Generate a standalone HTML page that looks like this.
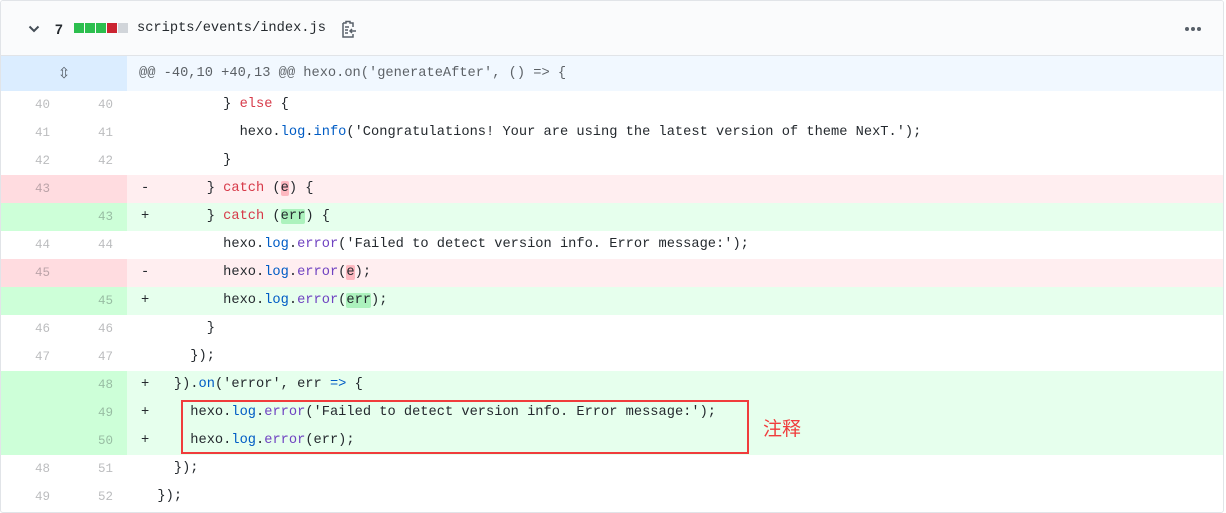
<!DOCTYPE html>
<html><head><meta charset="utf-8"><style>
*{margin:0;padding:0;box-sizing:border-box}
body{width:1226px;height:513px;background:#fff;font-family:"Liberation Mono",monospace;font-size:13.7px;color:#24292e;position:relative;overflow:hidden}
.wrap{position:absolute;left:0;top:0;width:1224px;height:513px;border:1px solid #e1e4e8;border-radius:3px;overflow:hidden}
.hdr{position:absolute;left:0;top:0;width:100%;height:55px;background:#fafbfc;border-bottom:1px solid #e1e4e8}
.row{position:absolute;left:0;width:100%;height:28px;line-height:28px;white-space:pre}
.n{position:absolute;top:0;width:63px;height:28px;color:rgba(27,31,35,.3);font-size:12.5px}
.n1{left:0;padding-left:34px}.n2{left:63px;padding-left:34px}
.c{position:absolute;left:126px;top:0;right:0;height:28px;padding-left:14px}
.del .n{background:#ffdce0}.del .c{background:#ffeef0}
.add .n{background:#cdffd8}.add .c{background:#e6ffed}
.k{color:#d73a49}.b{color:#005cc5}.p{color:#6f42c1}.s{color:#24292e}
.xd{background:#fdb8c0;border-radius:2px}.xa{background:#acf2bd;border-radius:2px}
.sq{position:absolute;top:22px;width:10px;height:10px}
</style></head><body>
<div class="wrap">
<div class="hdr">
<svg style="position:absolute;left:27px;top:23px" width="12" height="10" viewBox="0 0 12 10"><path d="M1.5 2.5L6 7L10.5 2.5" fill="none" stroke="#444d56" stroke-width="2"/></svg>
<span style="position:absolute;left:54px;top:20px;font-family:'Liberation Sans',sans-serif;font-weight:bold;font-size:14px;color:#24292e">7</span>
<span class="sq" style="left:73px;background:#2cbe4e"></span>
<span class="sq" style="left:84px;background:#2cbe4e"></span>
<span class="sq" style="left:95px;background:#2cbe4e"></span>
<span class="sq" style="left:106px;background:#cb2431"></span>
<span class="sq" style="left:117px;background:#d1d5da"></span>
<span style="position:absolute;left:136px;top:20px;font-size:13.7px;color:#24292e">scripts/events/index.js</span>
<svg style="position:absolute;left:339px;top:19px" width="17" height="19" viewBox="0 0 17 19"><path d="M3 3h3V1.5h4V3h3v4M3 3v14h10v-3M5 7h4M5 10h3M5 13h3M16 11h-6M12 9l-2 2 2 2" fill="none" stroke="#586069" stroke-width="1.5"/></svg>
<span style="position:absolute;left:1184px;top:26px;width:4px;height:4px;border-radius:2px;background:#586069;box-shadow:6px 0 #586069,12px 0 #586069"></span>
</div>
<div class="row" style="top:55px;height:35px;line-height:35px">
<div style="position:absolute;left:0;top:0;width:126px;height:35px;background:#dbedff;text-align:center;color:#586069;font-size:15px;font-family:'DejaVu Sans',sans-serif">⇳</div>
<div style="position:absolute;left:126px;top:0;right:0;height:35px;background:#f1f8ff;padding-left:12px;color:rgba(27,31,35,.7)">@@ -40,10 +40,13 @@ hexo.on('generateAfter', () =&gt; {</div>
</div>
<div class="row" style="top:90px"><span class="n n1">40</span><span class="n n2">40</span><span class="c">          } <span class="k">else</span> {</span></div>
<div class="row" style="top:118px"><span class="n n1">41</span><span class="n n2">41</span><span class="c">            hexo.<span class="b">log</span>.<span class="b">info</span>(<span class="s">'Congratulations! Your are using the latest version of theme NexT.'</span>);</span></div>
<div class="row" style="top:146px"><span class="n n1">42</span><span class="n n2">42</span><span class="c">          }</span></div>
<div class="row del" style="top:174px"><span class="n n1">43</span><span class="n n2"></span><span class="c">-       } <span class="k">catch</span> (<span class="xd">e</span>) {</span></div>
<div class="row add" style="top:202px"><span class="n n1"></span><span class="n n2">43</span><span class="c">+       } <span class="k">catch</span> (<span class="xa">err</span>) {</span></div>
<div class="row" style="top:230px"><span class="n n1">44</span><span class="n n2">44</span><span class="c">          hexo.<span class="b">log</span>.<span class="p">error</span>(<span class="s">'Failed to detect version info. Error message:'</span>);</span></div>
<div class="row del" style="top:258px"><span class="n n1">45</span><span class="n n2"></span><span class="c">-         hexo.<span class="b">log</span>.<span class="p">error</span>(<span class="xd">e</span>);</span></div>
<div class="row add" style="top:286px"><span class="n n1"></span><span class="n n2">45</span><span class="c">+         hexo.<span class="b">log</span>.<span class="p">error</span>(<span class="xa">err</span>);</span></div>
<div class="row" style="top:314px"><span class="n n1">46</span><span class="n n2">46</span><span class="c">        }</span></div>
<div class="row" style="top:342px"><span class="n n1">47</span><span class="n n2">47</span><span class="c">      });</span></div>
<div class="row add" style="top:370px"><span class="n n1"></span><span class="n n2">48</span><span class="c">+   }).<span class="b">on</span>(<span class="s">'error'</span>, err <span class="b">=&gt;</span> {</span></div>
<div class="row add" style="top:398px"><span class="n n1"></span><span class="n n2">49</span><span class="c">+     hexo.<span class="b">log</span>.<span class="p">error</span>(<span class="s">'Failed to detect version info. Error message:'</span>);</span></div>
<div class="row add" style="top:426px"><span class="n n1"></span><span class="n n2">50</span><span class="c">+     hexo.<span class="b">log</span>.<span class="p">error</span>(err);</span></div>
<div class="row" style="top:454px"><span class="n n1">48</span><span class="n n2">51</span><span class="c">    });</span></div>
<div class="row" style="top:482px"><span class="n n1">49</span><span class="n n2">52</span><span class="c">  });</span></div>
</div>
<div style="position:absolute;left:181px;top:400px;width:568px;height:54px;border:2px solid #f03c3c"></div>
<div style="position:absolute;left:763px;top:414px;font-family:'Liberation Sans','Noto Sans CJK SC',sans-serif;font-size:19px;color:#f03c3c">注释</div>
</body></html>
